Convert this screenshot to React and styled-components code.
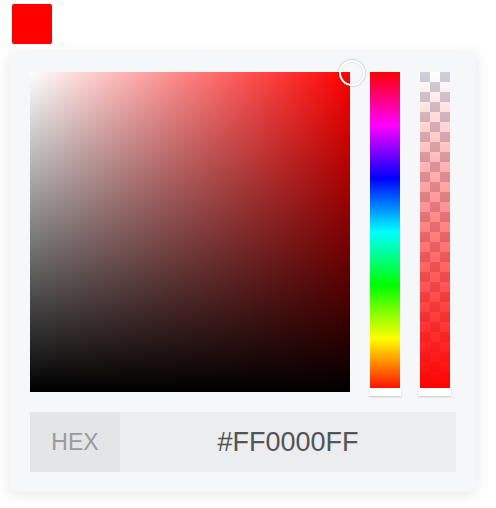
import React from "react";
import styled, { createGlobalStyle } from "styled-components";

const Global = createGlobalStyle`
  html, body { margin: 0; padding: 0; background: #fff; }
  body { font-family: "Liberation Sans", Arial, sans-serif; }
`;

const Page = styled.div`
  padding: 4px 20px 16px 10px;
  display: flex;
  flex-direction: column;
  align-items: flex-start;
  gap: 8px;
`;

const Swatch = styled.div`
  width: 40px;
  height: 40px;
  margin-left: 2px;
  border-radius: 2px;
  background: ${(p) => p.$color};
  box-shadow: 0 0 2px rgba(0, 0, 0, 0.15);
`;

const Panel = styled.div`
  width: 466px;
  box-sizing: border-box;
  padding: 20px;
  background: #f6f7f9;
  border-radius: 4px;
  box-shadow: 0 2px 14px rgba(0, 0, 0, 0.1);
  display: flex;
  flex-direction: column;
  gap: 20px;
`;

const Pickers = styled.div`
  display: flex;
  gap: 20px;
  height: 320px;
`;

const Saturation = styled.div`
  position: relative;
  width: 320px;
  height: 320px;
  background:
    linear-gradient(to bottom, rgba(0, 0, 0, 0), #000),
    linear-gradient(to right, #fff, rgba(255, 255, 255, 0)),
    ${(p) => p.$hue};
`;

const SatHandle = styled.div`
  position: absolute;
  left: 100%;
  top: 0;
  width: 22px;
  height: 22px;
  margin: -12px 0 0 -11px;
  border-radius: 50%;
  border: 2px solid #fff;
  box-shadow: 0 0 2px rgba(0, 0, 0, 0.45), inset 0 0 1px rgba(0, 0, 0, 0.3);
`;

const Bar = styled.div`
  position: relative;
  width: 30px;
  height: 320px;
  background: ${(p) => p.$bg};
`;

const BarHandle = styled.div`
  position: absolute;
  left: -1px;
  right: -1px;
  bottom: -4px;
  height: 8px;
  background: #fff;
  box-shadow: 0 1px 2px rgba(0, 0, 0, 0.2);
`;

const HexRow = styled.div`
  display: flex;
  height: 60px;
  background: #ecedef;
`;

const HexLabel = styled.div`
  width: 90px;
  display: flex;
  align-items: center;
  justify-content: center;
  background: #e4e5e7;
  color: #999a9c;
  font-size: 23px;
`;

const HexValue = styled.div`
  flex: 1;
  display: flex;
  align-items: center;
  justify-content: center;
  color: #535456;
  font-size: 27px;
`;

const hueGradient =
  "linear-gradient(to bottom, #f00 0%, #f0f 16.66%, #00f 33.33%, #0ff 50%, #0f0 66.66%, #ff0 83.33%, #f00 100%)";
const alphaBg =
  "linear-gradient(to bottom, rgba(255,0,0,0), #f00), " +
  "conic-gradient(#fff 0 25%, #ccd0d8 0 50%, #fff 0 75%, #ccd0d8 0) 0 0 / 20px 20px";

export default function App() {
  return (
    <>
      <Global />
      <Page>
        <Swatch $color="#f00" />
        <Panel>
          <Pickers>
            <Saturation $hue="#f00">
              <SatHandle />
            </Saturation>
            <Bar $bg={hueGradient}>
              <BarHandle />
            </Bar>
            <Bar $bg={alphaBg}>
              <BarHandle />
            </Bar>
          </Pickers>
          <HexRow>
            <HexLabel>HEX</HexLabel>
            <HexValue>#FF0000FF</HexValue>
          </HexRow>
        </Panel>
      </Page>
    </>
  );
}
